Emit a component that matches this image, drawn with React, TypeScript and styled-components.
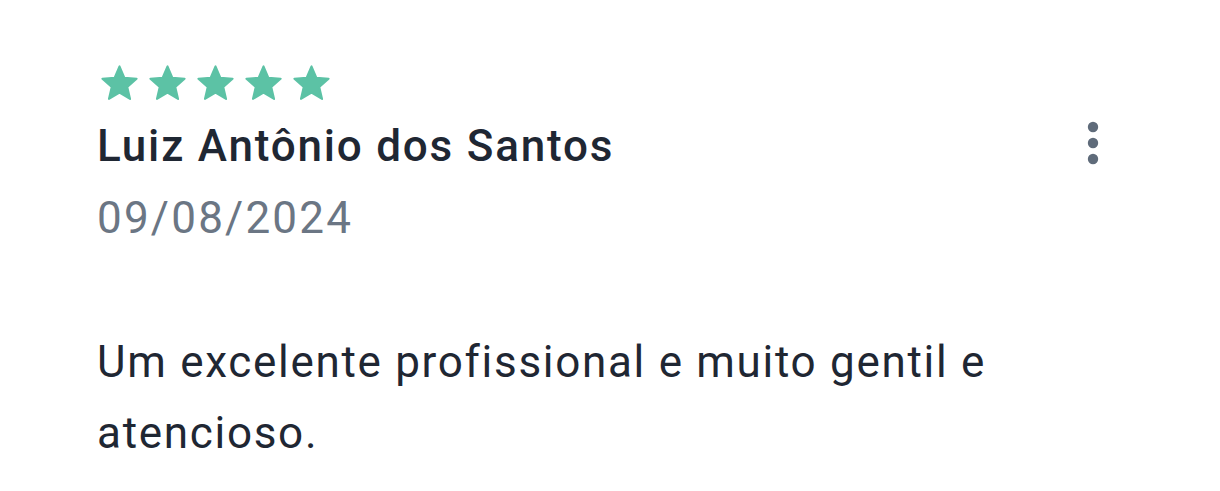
import React from "react";
import styled, { createGlobalStyle } from "styled-components";

const Global = createGlobalStyle`
  html, body { margin: 0; padding: 0; background: #ffffff; }
  body { font-family: Roboto, "Noto Sans", Arial, sans-serif; -webkit-font-smoothing: antialiased; }
`;

const Card = styled.div`
  width: 1220px;
  height: 491px;
  box-sizing: border-box;
  padding: 63px 121px 0 94px;
  display: flex;
  flex-direction: column;
  background: #ffffff;
`;

const Stars = styled.div`
  display: flex;
  gap: 7px;
  padding-left: 5px;
  height: 41px;
`;

const StarIcon = styled.svg`
  width: 41px;
  height: 41px;
  flex: none;
  fill: #5cc2a5;
  stroke: #5cc2a5;
  stroke-width: 1.2;
  stroke-linejoin: round;
`;

const HeaderRow = styled.div`
  display: flex;
  align-items: center;
  justify-content: space-between;
  margin-top: 14px;
`;

const Name = styled.div`
  font-size: 44px;
  line-height: 56px;
  font-weight: 500;
  letter-spacing: 1.8px;
  color: #1f2733;
  padding-left: 3px;
`;

const Kebab = styled.svg`
  width: 12px;
  height: 44px;
  fill: #5f6b7a;
  flex: none;
  margin-top: -6px;
`;

const DateText = styled.div`
  font-size: 44px;
  line-height: 56px;
  font-weight: 400;
  letter-spacing: 2.2px;
  color: #6b7684;
  margin-top: 16px;
  padding-left: 3px;
`;

const Review = styled.p`
  margin: 81px 0 0 0;
  font-size: 44px;
  line-height: 71px;
  font-weight: 400;
  letter-spacing: 1.7px;
  color: #1f2733;
  padding-left: 3px;
  max-width: 920px;
`;

const Star = () => (
  <StarIcon viewBox="0 0 24 24">
    <path d="M12 17.27L18.18 21l-1.64-7.03L22 9.24l-7.19-.61L12 2 9.19 8.63 2 9.24l5.46 4.73L5.82 21z" />
  </StarIcon>
);

export default function App() {
  return (
    <>
      <Global />
      <Card>
        <Stars>
          {[0, 1, 2, 3, 4].map((i) => (
            <Star key={i} />
          ))}
        </Stars>
        <HeaderRow>
          <Name>Luiz Antônio dos Santos</Name>
          <Kebab viewBox="0 0 12 44">
            <circle cx="6" cy="6" r="5.2" />
            <circle cx="6" cy="22" r="5.2" />
            <circle cx="6" cy="38" r="5.2" />
          </Kebab>
        </HeaderRow>
        <DateText>09/08/2024</DateText>
        <Review>Um excelente profissional e muito gentil e atencioso.</Review>
      </Card>
    </>
  );
}
